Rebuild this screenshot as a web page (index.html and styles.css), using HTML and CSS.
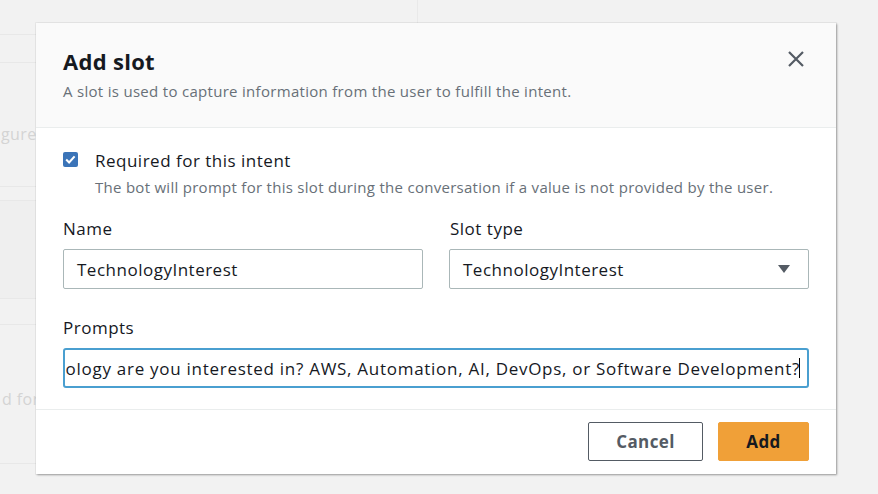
FILE: index.html
```html
<!DOCTYPE html>
<html>
<head>
<meta charset="utf-8">
<link rel="stylesheet" href="styles.css">
</head>
<body>
<div class="page">
  <div class="topbar"><div class="topbar-left"></div><div class="topbar-right"></div></div>
  <div class="side">
    <div class="row r1"></div>
    <div class="row r2"></div>
    <div class="row r3"><span class="ghost">gure</span></div>
    <div class="row r4"></div>
    <div class="row r5"></div>
    <div class="row r6"></div>
    <div class="row r7"><span class="ghost">d for</span></div>
  </div>
</div>

<div class="modal">
  <div class="modal-header">
    <div class="titles">
      <h1 class="title">Add slot</h1>
      <p class="subtitle">A slot is used to capture information from the user to fulfill the intent.</p>
    </div>
    <button class="close" aria-label="Close">
      <svg width="18" height="18" viewBox="0 0 18 18"><path d="M2 2L16 16M16 2L2 16" stroke="#545b64" stroke-width="2.2" fill="none"/></svg>
    </button>
  </div>
  <div class="modal-body">
    <div class="check-row">
      <span class="checkbox">
        <svg width="15" height="15" viewBox="0 0 15 15"><path d="M3.2 7.6L6.1 10.4L11.6 4.4" stroke="#fff" stroke-width="2.1" fill="none"/></svg>
      </span>
      <div>
        <div class="check-label">Required for this intent</div>
        <div class="check-desc">The bot will prompt for this slot during the conversation if a value is not provided by the user.</div>
      </div>
    </div>
    <div class="two-col">
      <div class="field">
        <label class="label">Name</label>
        <div class="input">TechnologyInterest</div>
      </div>
      <div class="field">
        <label class="label label-slot">Slot type</label>
        <div class="input select">
          <span>TechnologyInterest</span>
          <svg width="14" height="10" viewBox="0 0 14 10"><path d="M1 1H13L7 9Z" fill="#545b64"/></svg>
        </div>
      </div>
    </div>
    <div class="field prompts">
      <label class="label">Prompts</label>
      <div class="input focused"><span class="scroll-text">What type of technology are you interested in? AWS, Automation, AI, DevOps, or Software Development?</span><span class="caret"></span></div>
    </div>
  </div>
  <div class="modal-footer">
    <button class="btn btn-cancel">Cancel</button>
    <button class="btn btn-add">Add</button>
  </div>
</div>
</body>
</html>
```
FILE: styles.css
```css
* { box-sizing: border-box; }
html, body { margin: 0; padding: 0; }
body {
  width: 878px;
  height: 494px;
  overflow: hidden;
  background: #f2f2f2;
  font-family: "Open Sans", "Noto Sans", sans-serif;
  color: #16191f;
  position: relative;
}
.page { width: 878px; height: 494px; }
.topbar { display: flex; height: 23px; }
.topbar-left { width: 418px; border-right: 1px solid #e9e9e9; }
.side { width: 36px; display: flex; flex-direction: column; }
.row { border-bottom: 1px solid #e8e8e8; display: flex; align-items: flex-start; white-space: nowrap; }
.r1 { height: 12px; }
.r2 { height: 28px; }
.r3 { height: 124px; padding-top: 60px; }
.r4 { height: 14px; }
.r5 { height: 98px; background: #efefef; }
.r6 { height: 26px; }
.r7 { height: 139px; padding-top: 63px; }
.ghost { color: #d4d4d4; font-size: 16px; line-height: 22px; letter-spacing: 0.4px; }
.r3 .ghost { margin-left: 1px; }
.r7 .ghost { margin-left: 2px; }

.modal {
  position: absolute;
  left: 36px;
  top: 23px;
  width: 800px;
  height: 451px;
  background: #fff;
  box-shadow: 1px 1px 2px rgba(0,0,0,0.35), 0 0 0 1px rgba(0,0,0,0.04);
  display: flex;
  flex-direction: column;
}
.modal-header {
  background: #fafafa;
  border-bottom: 1px solid #eaeded;
  padding: 24px 27px 26px 27px;
  display: flex;
  justify-content: space-between;
  align-items: flex-start;
}
.title { margin: 0; font-size: 22px; line-height: 28px; font-weight: 700; letter-spacing: 0.3px; }
.subtitle { margin: 6px 0 0; font-size: 15px; line-height: 20px; color: #687078; letter-spacing: 0.3px; }
.close { background: none; border: 0; padding: 0; margin: 3px 4px 0 0; width: 18px; height: 18px; }
.close svg { display: block; }

.modal-body { padding: 22px 27px 21px; border-bottom: 1px solid #eaeded; }
.check-row { display: flex; align-items: flex-start; }
.checkbox {
  width: 15px; height: 15px; margin: 2px 17px 0 0; background: #3b74b8; border-radius: 2px;
  display: flex; flex: none;
}
.checkbox svg { display: block; }
.check-label { font-size: 17px; line-height: 22px; letter-spacing: 0.5px; }
.check-desc { margin-top: 5px; font-size: 15px; line-height: 20px; color: #687078; letter-spacing: 0.28px; }

.two-col { display: grid; grid-template-columns: 360px 360px; column-gap: 26px; margin-top: 21px; }
.field { display: flex; flex-direction: column; }
.label { font-size: 17px; line-height: 22px; letter-spacing: 0.5px; }
.label-slot { margin-left: 1px; }
.input {
  margin-top: 9px; height: 40px; border: 1px solid #aab7b8; border-radius: 2px;
  padding: 0 13px; display: flex; align-items: center; font-size: 17px; letter-spacing: 0.5px;
  white-space: nowrap; overflow: hidden;
}
.select { justify-content: space-between; padding-right: 17px; }
.prompts { margin-top: 28px; }
.focused { border: 2px solid #4a9fd0; border-radius: 3px; justify-content: flex-end; padding: 0 7px 0 12px; letter-spacing: 0.72px; }
.scroll-text { flex: none; }
.caret { flex: none; width: 1px; height: 20px; background: #000; margin-left: -1px; }

.modal-footer { padding: 12px 27px 13px; display: flex; justify-content: flex-end; gap: 15px; }
.btn { height: 39px; border-radius: 2px; font-family: inherit; font-size: 17px; font-weight: 700; letter-spacing: 0.4px; padding: 0; }
.btn-cancel { width: 115px; background: #fff; border: 1px solid #545b64; color: #545b64; }
.btn-add { width: 91px; background: #f0a038; border: 1px solid #f0a038; color: #16191f; }
```
